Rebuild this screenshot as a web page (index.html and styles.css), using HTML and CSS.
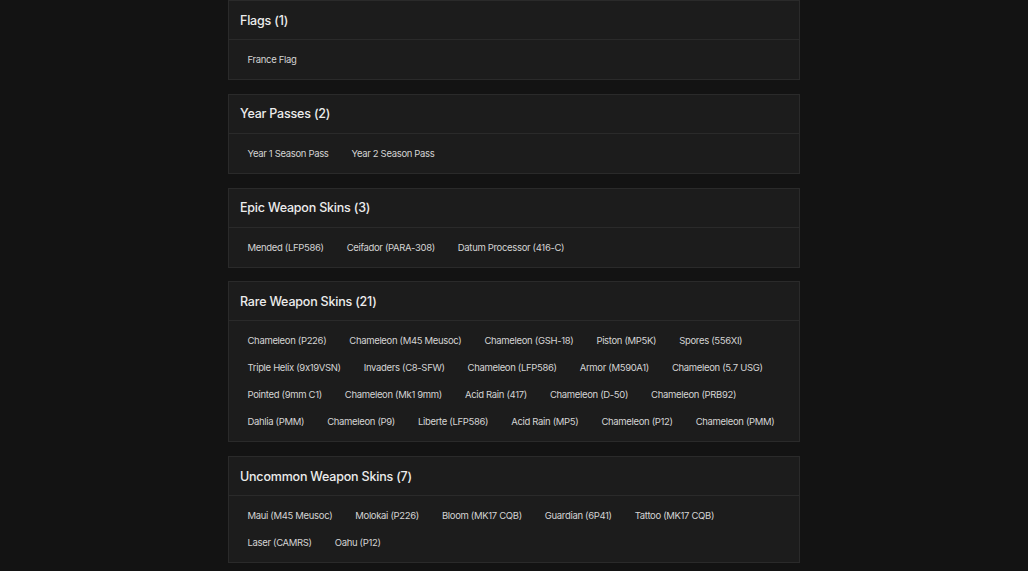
FILE: index.html
```html
<!DOCTYPE html>
<html lang="en">
<head>
<meta charset="utf-8">
<title>Inventory</title>
<link rel="stylesheet" href="styles.css">
</head>
<body>
<main class="list">
  <section class="card">
    <h2 class="card-title">Flags (1)</h2>
    <div class="card-body">
      <span class="item">France Flag</span>
    </div>
  </section>
  <section class="card">
    <h2 class="card-title">Year Passes (2)</h2>
    <div class="card-body">
      <span class="item">Year 1 Season Pass</span>
      <span class="item">Year 2 Season Pass</span>
    </div>
  </section>
  <section class="card">
    <h2 class="card-title">Epic Weapon Skins (3)</h2>
    <div class="card-body">
      <span class="item">Mended (LFP586)</span>
      <span class="item">Ceifador (PARA-308)</span>
      <span class="item">Datum Processor (416-C)</span>
    </div>
  </section>
  <section class="card">
    <h2 class="card-title">Rare Weapon Skins (21)</h2>
    <div class="card-body">
      <span class="item">Chameleon (P226)</span>
      <span class="item">Chameleon (M45 Meusoc)</span>
      <span class="item">Chameleon (GSH-18)</span>
      <span class="item">Piston (MP5K)</span>
      <span class="item">Spores (556XI)</span>
      <span class="item">Triple Helix (9x19VSN)</span>
      <span class="item">Invaders (C8-SFW)</span>
      <span class="item">Chameleon (LFP586)</span>
      <span class="item">Armor (M590A1)</span>
      <span class="item">Chameleon (5.7 USG)</span>
      <span class="item">Pointed (9mm C1)</span>
      <span class="item">Chameleon (Mk1 9mm)</span>
      <span class="item">Acid Rain (417)</span>
      <span class="item">Chameleon (D-50)</span>
      <span class="item">Chameleon (PRB92)</span>
      <span class="item">Dahlia (PMM)</span>
      <span class="item">Chameleon (P9)</span>
      <span class="item">Liberte (LFP586)</span>
      <span class="item">Acid Rain (MP5)</span>
      <span class="item">Chameleon (P12)</span>
      <span class="item">Chameleon (PMM)</span>
    </div>
  </section>
  <section class="card">
    <h2 class="card-title">Uncommon Weapon Skins (7)</h2>
    <div class="card-body">
      <span class="item">Maui (M45 Meusoc)</span>
      <span class="item">Molokai (P226)</span>
      <span class="item">Bloom (MK17 CQB)</span>
      <span class="item">Guardian (6P41)</span>
      <span class="item">Tattoo (MK17 CQB)</span>
      <span class="item">Laser (CAMRS)</span>
      <span class="item">Oahu (P12)</span>
    </div>
  </section>
</main>
</body>
</html>
```

FILE: styles.css
```css
html, body {
  margin: 0;
  padding: 0;
  background: #131313;
}
body {
  font-family: "Inter", "Noto Sans", sans-serif;
  font-feature-settings: "calt" 0;
  color: #d4d4d4;
}
.list {
  width: 572px;
  margin: 0 auto;
  display: flex;
  flex-direction: column;
  gap: 13.8px;
}
.card {
  background: #1c1c1c;
  border: 1px solid #2a2a2a;
}
.card-title {
  margin: 0;
  height: 38px;
  display: flex;
  align-items: center;
  padding: 0 11px;
  font-size: 12.5px;
  font-weight: 500;
  letter-spacing: -0.2px;
  color: #ececec;
  border-bottom: 1px solid #2a2a2a;
}
.card-body {
  display: flex;
  flex-wrap: wrap;
  padding: 6px 7px;
}
.item {
  height: 27px;
  line-height: 27px;
  padding: 0 11.5px;
  font-size: 9.5px;
  letter-spacing: -0.33px;
  color: #d4d4d4;
  white-space: nowrap;
}
```
